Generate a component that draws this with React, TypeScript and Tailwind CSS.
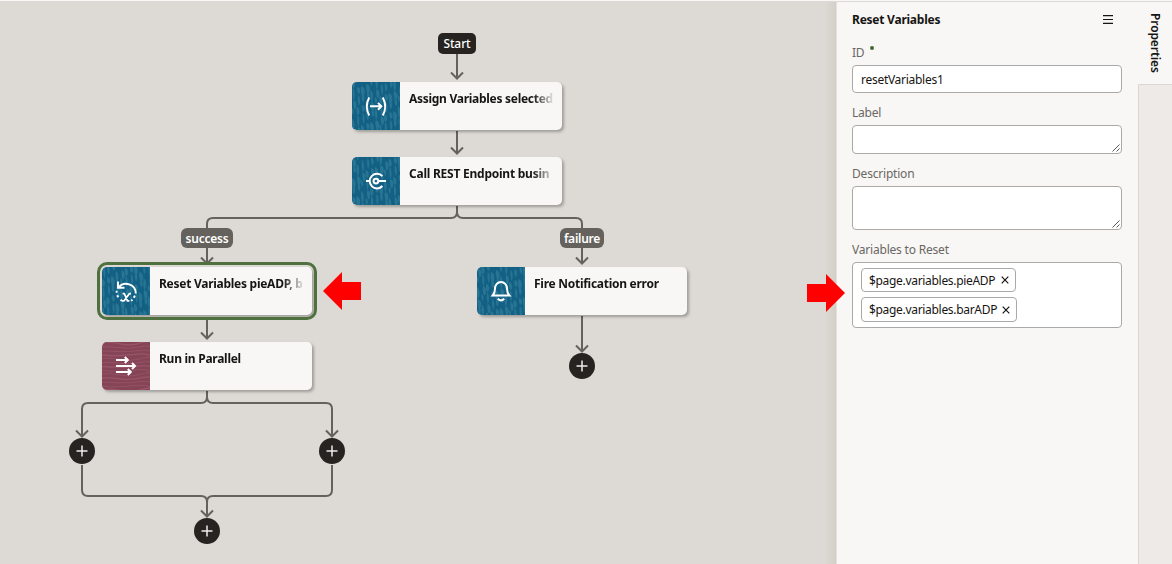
import React from "react";

const INK = "#65625d";

function Tile({ kind, seed }: { kind: "blue" | "wine"; seed: number }) {
  const items: React.ReactNode[] = [];
  if (kind === "blue") {
    for (let c = 0; c < 11; c++) {
      for (let r = 0; r < 6; r++) {
        const n = (c * 37 + r * 53 + seed * 17) % 11;
        const x = c * 4.6 + (n % 3) * 0.7;
        const y = r * 10 - 5 + ((c * 7 + seed) % 9) + (n % 4);
        const h = 7 + (n % 5) * 1.3;
        const w = 2 + (n % 4) * 0.5;
        items.push(
          <path key={`${c}-${r}`} d={`M${x} ${y}q${w} ${h * 0.1} ${w} ${h * 0.5}q0 ${h * 0.4} ${-w * 0.6} ${h * 0.5}q${-w * 0.7} ${-h * 0.4} ${-w * 0.4} ${-h}z`} fill="#287493" />
        );
      }
    }
  } else {
    for (let r = 0; r < 13; r++) {
      const y = r * 3.9 + 1;
      const a = ((r * 5) % 4) - 1.5;
      items.push(<path key={r} d={`M-2 ${y}Q8 ${y + a} 18 ${y + 0.8}T36 ${y - a * 0.4}T50 ${y + a}`} fill="none" stroke="#995568" strokeWidth={r % 3 === 0 ? 1.3 : 0.8} />);
    }
  }
  return (
    <svg width="48" height="48" viewBox="0 0 48 48" className="col-start-1 row-start-1">
      <rect width="48" height="48" fill={kind === "blue" ? "#136085" : "#854557"} />
      {items}
    </svg>
  );
}

const icons: Record<string, React.ReactNode> = {
  assign: (
    <path d="M17.200 15.500Q12.400 24.500 17.200 33.500M30.800 15.500Q35.600 24.500 30.800 33.500M18 24.300H29M26 20.900L29.400 24.300L26 27.700" />
  ),
  rest: (
    <>
      <path d="M30.400 19.200A7.300 7.300 0 1 0 30.400 29M14 24.100H17M26.500 24.100H34" />
      <circle cx="24" cy="24.100" r="2.400" />
    </>
  ),
  reset: (
    <>
      <path d="M16.500 20.500A9.700 9.700 0 0 1 33.800 26.500M16 14.500V20.700H22.500" />
      <path d="M13.700 24.800h1.800M15.200 28.300l1 2M18.500 32.700l1.500 1.200M32.900 28.600l-1.100 2.200M30.500 32.700l-1.300 1" />
      <path d="M20.600 26.700H22.300L25.500 33.900H27.400M29 26.700H27.400L21.900 33.900H20" strokeWidth="1.700" />
    </>
  ),
  bell: (
    <>
      <path d="M15.700 28.500C18 26 18 24 18 21.500a6 6.500 0 0 1 12 0C30 24 30 26 32.300 28.500Z" />
      <path d="M20.800 31.800Q24 35 27.200 31.800" />
    </>
  ),
  parallel: <path d="M14 18H25.500M22.800 15L25.800 18L22.800 21M14 24H33M30 21L33 24L30 27M14 30H28.500M25.800 27L28.800 30L25.800 33" />,
};

function Card({ x, y, icon, text, kind = "blue", seed = 1, selected = false, spacing = "tracking-[-0.27px]" }: {
  x: number; y: number; icon: string; text: string; kind?: "blue" | "wine"; seed?: number; selected?: boolean; spacing?: string;
}) {
  return (
    <div className={`absolute rounded-[5px] ${selected ? "outline-3 outline-offset-2 outline-[#4f703f]" : ""}`} style={{ left: x, top: y }}>
      <div className="flex h-12 w-[210px] overflow-hidden rounded-[5px] bg-[#f8f7f5] shadow-[2px_2px_3px_rgba(0,0,0,0.28)]">
        <div className="grid size-12 shrink-0">
          <Tile kind={kind} seed={seed} />
          <svg width="48" height="48" viewBox="0 0 48 48" className="col-start-1 row-start-1" fill="none" stroke="white" strokeWidth="2">
            {icons[icon]}
          </svg>
        </div>
        <div className="ml-[9px] w-[144px] overflow-hidden pt-[7px] [mask-image:linear-gradient(to_right,black_124px,transparent_146px)]">
          <span className={`block text-[12px] leading-5 font-bold whitespace-nowrap text-[#161513] ${spacing}`}>{text}</span>
        </div>
      </div>
    </div>
  );
}

function Add({ x, y }: { x: number; y: number }) {
  return (
    <button className="absolute flex size-[26px] items-center justify-center rounded-full bg-[#272320]" style={{ left: x - 13, top: y - 13 }}>
      <svg width="12" height="12" viewBox="0 0 12 12" stroke="#eeedeb" strokeWidth="1.5"><path d="M6 .5v11M.5 6h11" /></svg>
    </button>
  );
}

function Arrow({ className, flip = false }: { className: string; flip?: boolean }) {
  return (
    <svg width="38" height="38" viewBox="0 0 38 38" className={`absolute ${className}`}>
      <path d={flip ? "M38 10H19V0L0 19L19 38V28H38Z" : "M0 10H19V0L38 19L19 38V28H0Z"} fill="#fe0000" />
    </svg>
  );
}

function TextArea({ className }: { className: string }) {
  return (
    <div className={`flex items-end justify-end rounded-[4px] border border-[#aaa9a7] bg-white p-px ${className}`}>
      <svg width="8" height="8" viewBox="0 0 8 8" stroke="#555" strokeWidth="1"><path d="M.5 7.500l7-7M4.500 7.500l3-3" /></svg>
    </div>
  );
}

function Label({ text }: { text: string }) {
  return <label className="flex h-8 items-center pt-[8px] tracking-[-0.2px] text-[#6a6763]">{text}</label>;
}

function Chip({ text, className }: { text: string; className: string }) {
  return (
    <div className={`flex items-center justify-between rounded-[4px] border border-[#aaa9a7] bg-white pr-[6px] pl-[7px] ${className}`}>
      <span className="pt-px tracking-[-0.31px] whitespace-nowrap">{text}</span>
      <svg width="8" height="8" viewBox="0 0 8 8" stroke="#161513" strokeWidth="1.200"><path d="M.7.7l6.600 6.600M7.300.7L.7 7.300" /></svg>
    </div>
  );
}

export default function App() {
  return (
    <div className="flex h-[564px] w-[1172px] flex-col overflow-hidden bg-[#f8f7f5] font-['Noto_Sans','Open_Sans',sans-serif] text-[#161513]">
      <div className="h-[2px] shrink-0 border-b border-[#dcdad7] bg-[#f8f7f5]" />
      <div className="flex min-h-0 flex-1">
        <main className="relative w-[836px] shrink-0 bg-[#dddad5] bg-[linear-gradient(to_right,transparent_824px,#d3cfc8_836px)]">
          <svg width="836" height="562" viewBox="0 2 836 562" fill="none" stroke={INK} strokeWidth="2">
            <path d="M457 54V79M451 72.500L457 78.500L463 72.500M457 131V154M451 147.500L457 153.500L463 147.500" />
            <path d="M457 206V212Q457 218 451 218H213Q207 218 207 224V262M457 206V212Q457 218 463 218H576Q582 218 582 224V263M201 257.500L207 263.500L213 257.500M576 257.500L582 263.500L588 257.500" />
            <path d="M207 320V339M201 332.500L207 338.500L213 332.500M582 316V351M576 345.500L582 351.500L588 345.500" />
            <path d="M207 391V397Q207 403 201 403H88Q82 403 82 409V436M207 391V397Q207 403 213 403H326Q332 403 332 409V436M76 430.500L82 436.500L88 430.500M326 430.500L332 436.500L338 430.500" />
            <path d="M82 465V490Q82 496 88 496H201Q207 496 207 502V516M332 465V490Q332 496 326 496H213Q207 496 207 502M201 510.500L207 516.500L213 510.500" />
          </svg>
          <div className="absolute top-[31px] left-[438px] flex h-[21px] w-[38px] items-center justify-center rounded-[5px] bg-[#272320] text-[12px] font-medium tracking-[-0.1px] text-white">Start</div>
          <div className="absolute top-[226px] left-[181px] flex h-5 w-[52px] items-center justify-center rounded-[6px] bg-[#65625d] pt-[2px] text-[12px] font-semibold tracking-[-0.2px] text-white">success</div>
          <div className="absolute top-[226px] left-[560px] flex h-5 w-[44px] items-center justify-center rounded-[6px] bg-[#65625d] pt-[2px] text-[12px] font-semibold tracking-[-0.25px] text-white">failure</div>
          <Card x={352} y={80} icon="assign" text="Assign Variables selected" seed={1} spacing="tracking-[-0.28px]" />
          <Card x={352} y={155} icon="rest" text="Call REST Endpoint busin" seed={3} spacing="tracking-[-0.24px]" />
          <Card x={102} y={265} icon="reset" text="Reset Variables pieADP, b" seed={5} selected />
          <Card x={102} y={340} icon="parallel" kind="wine" text="Run in Parallel" />
          <Card x={477} y={265} icon="bell" text="Fire Notification error" seed={4} />
          <Add x={582} y={364} />
          <Add x={82} y={449} />
          <Add x={332} y={449} />
          <Add x={207} y={529} />
          <Arrow className="top-[270px] left-[323px]" flip />
          <Arrow className="top-[272px] left-[807px] z-10" />
        </main>
        <aside className="w-[302px] shrink-0 border-l border-[#e4e2df] bg-[#f8f7f5] pr-4 pl-[15px] text-[12px]">
          <header className="flex h-[35px] items-center justify-between pr-[9px]">
            <h2 className="pt-px font-bold tracking-[-0.24px]">Reset Variables</h2>
            <svg width="10" height="9" viewBox="0 0 10 9" stroke="#161513" strokeWidth="1.200"><path d="M0 .6h10M0 4.500h10M0 8.400h10" /></svg>
          </header>
          <label className="flex h-7 items-center gap-[6px] pt-[4px] tracking-[-0.2px] text-[#6a6763]">ID<span className="mb-[11px] size-1 rounded-full bg-[#436b32]" /></label>
          <div className="flex h-7 items-center rounded-[4px] border border-[#aaa9a7] bg-white pt-[2px] pl-2 tracking-[-0.28px]">resetVariables1</div>
          <Label text="Label" />
          <TextArea className="h-[29px]" />
          <Label text="Description" />
          <TextArea className="h-[44px]" />
          <Label text="Variables to Reset" />
          <div className="flex h-[66px] flex-col gap-[5px] rounded-[4px] border border-[#aaa9a7] bg-white pt-[5px] pl-2">
            <Chip text="$page.variables.pieADP" className="h-6 w-[155px]" />
            <Chip text="$page.variables.barADP" className="h-[25px] w-[156px]" />
          </div>
        </aside>
        <nav className="flex flex-1 flex-col">
          <div className="flex h-[82px] items-center justify-center text-[12px] font-semibold tracking-[-0.1px] [writing-mode:vertical-rl]">Properties</div>
          <div className="flex-1 rounded-tl-[2px] border-t border-l border-[#dad7d3] bg-[#eeeae7]" />
        </nav>
      </div>
    </div>
  );
}
